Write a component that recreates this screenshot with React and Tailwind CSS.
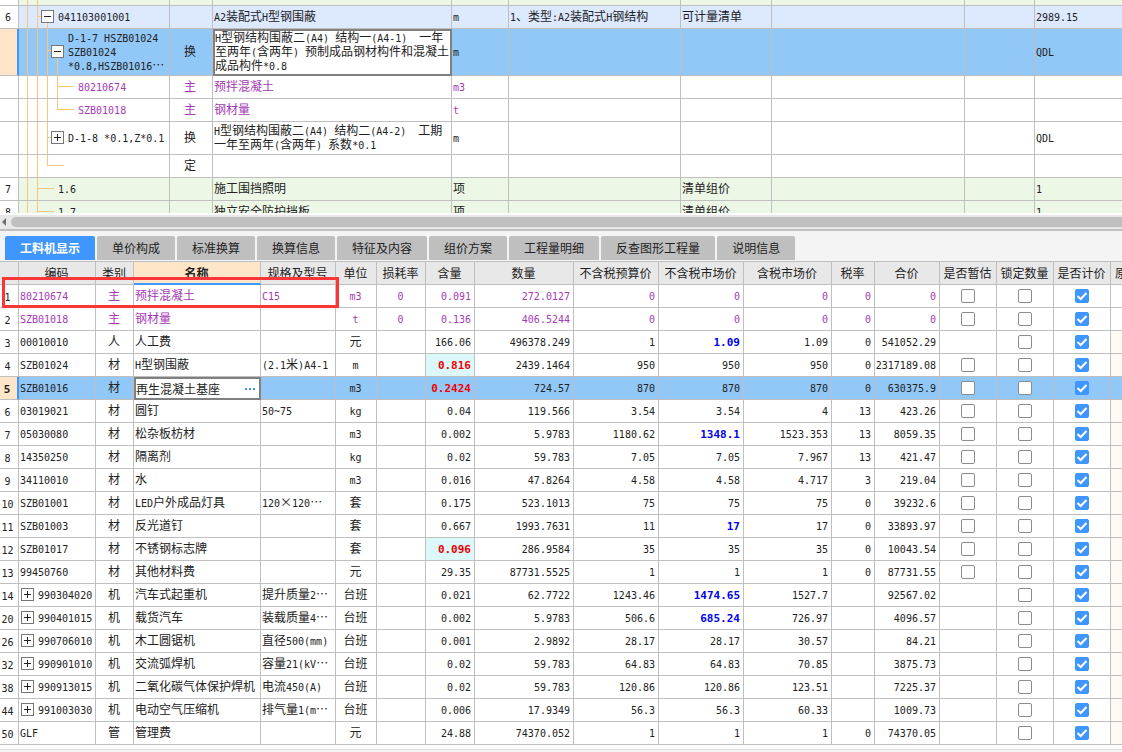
import React from "react";

const CJK = "font-['Noto_Sans_CJK_SC',sans-serif]";

/* Ideographs take 12px each, half-width characters 6px each. */
function Text({ children, bold }) {
  return String(children)
    .split(/([\x20-\x7e]+)/)
    .map((run, i) =>
      i % 2 ? (
        <span
          key={i}
          className={
            bold
              ? "font-['DejaVu_Sans_Mono',monospace] text-[11px] leading-none font-bold"
              : "font-['DejaVu_Sans_Mono',monospace] text-[10px] leading-none"
          }
        >
          {run}
        </span>
      ) : (
        run
      )
    );
}

function Toggle({ open, label }) {
  return (
    <button
      type="button"
      aria-label={label}
      aria-expanded={open}
      className="relative block size-[13px] shrink-0 border border-[#777] bg-white"
    >
      <svg viewBox="0 0 11 11" className="block size-[11px]" fill="#222">
        <path d={open ? "M2 5h7v1H2z" : "M2 5h3V2h1v3h3v1H6v3H5V6H2z"} />
      </svg>
    </button>
  );
}

function Check({ checked, label }) {
  return (
    <span className="mx-auto grid size-[14px]">
      <input
        type="checkbox"
        defaultChecked={checked}
        aria-label={label}
        className="peer col-start-1 row-start-1 m-0 size-[14px] appearance-none rounded-[2px] border border-[#8c8c8c] bg-white checked:border-[#4096ff] checked:bg-[#4096ff]"
      />
      <svg
        viewBox="0 0 14 14"
        className="pointer-events-none invisible col-start-1 row-start-1 size-[14px] peer-checked:visible"
        fill="none"
        stroke="#fff"
        strokeWidth="2"
      >
        <path d="M2.5 7L5.7 10L11.5 4" />
      </svg>
    </span>
  );
}

/* Tree guides: full = full-height lines, half = line ending at the middle,
   branch = horizontal connector [start, length], below = line starting under the toggle. */
function Guides({ full = [], half, branch, below }) {
  return (
    <svg
      className="pointer-events-none absolute inset-0 h-full w-full"
      fill="#fdc57b"
      shapeRendering="crispEdges"
      aria-hidden="true"
    >
      {full.map((x) => (
        <rect key={x} x={x} y="0" width="1" height="100%" />
      ))}
      {half && <rect x={half} y="0" width="1" height="50%" />}
      {below && <rect x={below} y="50%" width="1" height="50%" />}
      {branch && <rect x={branch[0]} y="46%" width={branch[1]} height="1" />}
    </svg>
  );
}

const TOP = [
  { h: "h-[6px]", bg: "bg-[#ecf7e6]", guides: { full: [8, 18] } },
  {
    n: "6", h: "h-[23px]", bg: "bg-[#dce9ff]", pad: "pl-[22px]", open: true, code: "041103001001",
    guides: { full: [8, 18], branch: [18, 5], below: 28 },
    name: "A2装配式H型钢围蔽", unit: "m", feat: "1、类型:A2装配式H钢结构", kind: "可计量清单", qty: "2989.15",
  },
  {
    selected: true, h: "h-[47px]", bg: "bg-[#92c8f7]", pad: "pl-[32px]", open: true,
    code: "D-1-7 HSZB01024\nSZB01024\n*0.8,HSZB01016⋯",
    guides: { full: [8, 18, 28], branch: [28, 5], below: 38 },
    cat: "换",
    name: "H型钢结构围蔽二(A4) 结构一(A4-1)  一年\n至两年(含两年) 预制成品钢材构件和混凝土\n成品构件*0.8",
    unit: "m", qty: "QDL",
  },
  {
    h: "h-[23px]", pad: "pl-[59px]", code: "80210674", purple: true, cat: "主", name: "预拌混凝土", unit: "m3",
    guides: { full: [8, 18, 28, 38], branch: [38, 17] },
  },
  {
    h: "h-[23px]", pad: "pl-[59px]", code: "SZB01018", purple: true, cat: "主", name: "钢材量", unit: "t",
    guides: { full: [8, 18, 28], half: 38, branch: [38, 17] },
  },
  {
    h: "h-[33px]", pad: "pl-[32px]", open: false, code: "D-1-8 *0.1,Z*0.1", cat: "换",
    guides: { full: [8, 18, 28], branch: [28, 5] },
    name: "H型钢结构围蔽二(A4) 结构二(A4-2)  工期\n一年至两年(含两年) 系数*0.1", unit: "m", qty: "QDL",
  },
  { h: "h-[23px]", cat: "定", guides: { full: [8, 18], half: 28, branch: [28, 17] } },
  {
    n: "7", h: "h-[23px]", bg: "bg-[#ecf7e6]", pad: "pl-[39px]", code: "1.6", name: "施工围挡照明", unit: "项",
    kind: "清单组价", qty: "1", guides: { full: [8, 18], branch: [18, 17] },
  },
  {
    n: "8", h: "h-[23px]", bg: "bg-[#ecf7e6]", pad: "pl-[39px]", code: "1.7", name: "独立安全防护挡板", unit: "项",
    kind: "清单组价", qty: "1", guides: { full: [8, 18], branch: [18, 17] },
  },
];

const BOX = "overflow-hidden border-r border-b border-[#bfbfbf] p-0";
const CELL = `${BOX} pb-0.5`;
const LEFT = `${CELL} pl-px`;

function TopTable() {
  return (
    <div className="h-[215px] overflow-hidden border-b-2 border-white">
      <table className="w-full table-fixed border-separate border-spacing-0 leading-[14px] whitespace-pre">
        <colgroup>
          <col className="w-[19px]" />
          <col className="w-[151px]" />
          <col className="w-[43px]" />
          <col className="w-[239px]" />
          <col className="w-[57px]" />
          <col className="w-[172px]" />
          <col className="w-[91px]" />
          <col className="w-[193px]" />
          <col className="w-[70px]" />
          <col />
        </colgroup>
        <tbody>
          {TOP.map((r, i) => (
            <tr key={i} className={`${r.h} ${r.bg || "bg-white"} ${r.purple ? "text-[#a43bb5]" : ""}`}>
              <th
                scope="row"
                className={
                  r.selected
                    ? "border-r-2 border-b border-r-[#4096ff] border-b-[#bfbfbf] bg-[#ffe6c8] p-0"
                    : `${CELL} bg-white pr-0.5 font-normal`
                }
              >
                {r.n && <Text>{r.n}</Text>}
              </th>
              <td className={`${CELL} relative`}>
                <Guides {...r.guides} />
                {r.code && (
                  <div className={`relative flex items-center gap-1 ${r.pad}`}>
                    {r.open !== undefined && <Toggle open={r.open} label="展开或折叠" />}
                    <span>
                      <Text>{r.code}</Text>
                    </span>
                  </div>
                )}
              </td>
              <td className={`${CELL} pr-0.5 text-center`}>{r.cat}</td>
              <td
                className={
                  r.selected
                    ? "bg-white p-0 pb-1 pl-0.5 outline-2 -outline-offset-2 outline-[#808080]"
                    : LEFT
                }
              >
                {r.name && <Text>{r.name}</Text>}
              </td>
              <td className={LEFT}>{r.unit && <Text>{r.unit}</Text>}</td>
              <td className={LEFT}>{r.feat && <Text>{r.feat}</Text>}</td>
              <td className={LEFT}>{r.kind && <Text>{r.kind}</Text>}</td>
              <td className={CELL} />
              <td className={CELL} />
              <td className={`${LEFT} border-r-0`}>{r.qty && <Text>{r.qty}</Text>}</td>
            </tr>
          ))}
        </tbody>
      </table>
    </div>
  );
}

const TABS = ["工料机显示", "单价构成", "标准换算", "换算信息", "特征及内容", "组价方案", "工程量明细", "反查图形工程量", "说明信息"];

const HEADERS = [
  "编码", "类别", "名称", "规格及型号", "单位", "损耗率", "含量", "数量", "不含税预算价",
  "不含税市场价", "含税市场价", "税率", "合价", "是否暂估", "锁定数量", "是否计价",
];

/* n, code, category, name, spec, unit, loss, content, quantity, budget, market, taxed, rate, total, estimate box */
const ROWS = [
  ["1", "80210674", "主", "预拌混凝土", "C15", "m3", "0", "0.091", "272.0127", "0", "0", "0", "0", "0", true],
  ["2", "SZB01018", "主", "钢材量", "", "t", "0", "0.136", "406.5244", "0", "0", "0", "0", "0", true],
  ["3", "00010010", "人", "人工费", "", "元", "", "166.06", "496378.249", "1", "1.09", "1.09", "0", "541052.29", false],
  ["4", "SZB01024", "材", "H型钢围蔽", "(2.1米)A4-1", "m", "", "0.816", "2439.1464", "950", "950", "950", "0", "2317189.08", true],
  ["5", "SZB01016", "材", "再生混凝土基座", "", "m3", "", "0.2424", "724.57", "870", "870", "870", "0", "630375.9", true],
  ["6", "03019021", "材", "圆钉", "50~75", "kg", "", "0.04", "119.566", "3.54", "3.54", "4", "13", "423.26", true],
  ["7", "05030080", "材", "松杂板枋材", "", "m3", "", "0.002", "5.9783", "1180.62", "1348.1", "1523.353", "13", "8059.35", true],
  ["8", "14350250", "材", "隔离剂", "", "kg", "", "0.02", "59.783", "7.05", "7.05", "7.967", "13", "421.47", true],
  ["9", "34110010", "材", "水", "", "m3", "", "0.016", "47.8264", "4.58", "4.58", "4.717", "3", "219.04", true],
  ["10", "SZB01001", "材", "LED户外成品灯具", "120×120⋯", "套", "", "0.175", "523.1013", "75", "75", "75", "0", "39232.6", true],
  ["11", "SZB01003", "材", "反光道钉", "", "套", "", "0.667", "1993.7631", "11", "17", "17", "0", "33893.97", true],
  ["12", "SZB01017", "材", "不锈钢标志牌", "", "套", "", "0.096", "286.9584", "35", "35", "35", "0", "10043.54", true],
  ["13", "99450760", "材", "其他材料费", "", "元", "", "29.35", "87731.5525", "1", "1", "1", "0", "87731.55", true],
  ["14", "990304020", "机", "汽车式起重机", "提升质量2⋯", "台班", "", "0.021", "62.7722", "1243.46", "1474.65", "1527.7", "", "92567.02", false],
  ["20", "990401015", "机", "载货汽车", "装载质量4⋯", "台班", "", "0.002", "5.9783", "506.6", "685.24", "726.97", "", "4096.57", false],
  ["26", "990706010", "机", "木工圆锯机", "直径500(mm)", "台班", "", "0.001", "2.9892", "28.17", "28.17", "30.57", "", "84.21", false],
  ["32", "990901010", "机", "交流弧焊机", "容量21(kV⋯", "台班", "", "0.02", "59.783", "64.83", "64.83", "70.85", "", "3875.73", false],
  ["38", "990913015", "机", "二氧化碳气体保护焊机", "电流450(A)", "台班", "", "0.02", "59.783", "120.86", "120.86", "123.51", "", "7225.37", false],
  ["44", "991003030", "机", "电动空气压缩机", "排气量1(m⋯", "台班", "", "0.006", "17.9349", "56.3", "56.3", "60.33", "", "1009.73", false],
  ["50", "GLF", "管", "管理费", "", "元", "", "24.88", "74370.052", "1", "1", "1", "0", "74370.05", false],
];

const RED = ["0.816", "0.2424", "0.096"];
const BLUE = ["3", "7", "11", "14", "20"];

function BottomRow({ row }) {
  const [n, code, cat, name, spec, unit, loss, content, qty, budget, market, taxed, rate, total, est] = row;
  const selected = n === "5";
  const purple = cat === "主";
  const red = RED.includes(content);
  const blue = BLUE.includes(n);
  const num = `${CELL} pr-[3px] text-right`;
  const mid = `${CELL} pr-px text-center`;
  return (
    <tr className={`h-[23px] ${selected ? "bg-[#92c8f7]" : "bg-white"} ${purple ? "text-[#a43bb5]" : ""}`}>
      <th
        scope="row"
        className={
          selected
            ? "border-r-2 border-b border-r-[#4096ff] border-b-[#bfbfbf] bg-[#ffe6c8] p-0 pr-[3px]"
            : `${BOX} pr-[3px] font-normal text-[#222]`
        }
      >
        <Text bold={selected}>{n}</Text>
      </th>
      <td className={LEFT}>
        <div className={`flex items-center gap-1 ${cat === "机" ? "pl-px" : ""}`}>
          {cat === "机" && <Toggle open={false} label={`展开 ${name}`} />}
          <span>
            <Text>{code}</Text>
          </span>
        </div>
      </td>
      <td className={mid}>{cat}</td>
      {selected ? (
        <td className="bg-white p-0 pl-px outline-2 -outline-offset-2 outline-[#808080]">
          <div className="flex items-center">
            <input
              type="text"
              aria-label="名称"
              defaultValue={name}
              className="h-[18px] min-w-0 flex-1 bg-transparent pl-px outline-none"
            />
            <button type="button" aria-label="选择" className="px-[5px]">
              <svg viewBox="0 0 11 2" className="h-0.5 w-[11px]" fill="#4a98d8">
                <path d="M0 0h2v2H0zM4 0h2v2H4zM8 0h2v2H8z" />
              </svg>
            </button>
          </div>
        </td>
      ) : (
        <td className={LEFT}>
          <Text>{name}</Text>
        </td>
      )}
      <td className={LEFT}>
        <Text>{spec}</Text>
      </td>
      <td className={mid}>
        <Text>{unit}</Text>
      </td>
      <td className={mid}>
        <Text>{loss}</Text>
      </td>
      <td className={`${num} ${red ? "text-[#f00000]" : ""} ${red && !selected ? "bg-[#dcf8f8]" : ""}`}>
        <Text bold={red}>{content}</Text>
      </td>
      <td className={num}>
        <Text>{qty}</Text>
      </td>
      <td className={num}>
        <Text>{budget}</Text>
      </td>
      <td className={`${num} ${blue ? "text-[#0000f0]" : ""}`}>
        <Text bold={blue}>{market}</Text>
      </td>
      <td className={num}>
        <Text>{taxed}</Text>
      </td>
      <td className={num}>
        <Text>{rate}</Text>
      </td>
      <td className={num}>
        <Text>{total}</Text>
      </td>
      <td className={BOX}>{est && <Check label={`是否暂估 ${name}`} />}</td>
      <td className={BOX}>
        <Check label={`锁定数量 ${name}`} />
      </td>
      <td className={BOX}>
        <Check checked label={`是否计价 ${name}`} />
      </td>
      <td className={`${BOX} border-r-0 ${purple || selected ? "" : "bg-[#fffaf4]"}`} />
    </tr>
  );
}

export default function App() {
  return (
    <main
      lang="zh-CN"
      className={`flex min-h-screen flex-col overflow-hidden bg-[#f4f4f4] text-[12px] text-[#222] ${CJK}`}
    >
      <TopTable />

      <div className="flex h-[14px] items-center gap-[5px] bg-[#e8e8e8]">
        <button type="button" aria-label="向左滚动" className="pl-0.5">
          <svg viewBox="0 0 4 8" className="h-2 w-1" fill="#707070">
            <path d="M4 0V8L0 4z" />
          </svg>
        </button>
        <div className="h-[10px] flex-1 rounded-l-full bg-[#bfbfbf]" />
      </div>

      <nav className="flex gap-0.5 border-t-2 border-b border-[#bfbfbf] bg-[#f4f4f4] pt-[5px] pb-px pl-[5px]">
        {TABS.map((t, i) => (
          <button
            key={t}
            type="button"
            className={`h-6 shrink-0 rounded-t-[2px] px-[15px] whitespace-nowrap ${
              i === 0 ? "bg-[#4096ff] font-bold text-white" : "bg-[#bfbfbf]"
            }`}
          >
            {t}
          </button>
        ))}
      </nav>

      <div className="relative border-b border-[#dcdcdc] bg-white pb-1">
        <table className="w-full table-fixed border-separate border-spacing-0 leading-[14px] whitespace-nowrap">
          <colgroup>
            <col className="w-[19px]" />
            <col className="w-[77px]" />
            <col className="w-[38px]" />
            <col className="w-[127px]" />
            <col className="w-[75px]" />
            <col className="w-[41px]" />
            <col className="w-[49px]" />
            <col className="w-[49px]" />
            <col className="w-[99px]" />
            <col className="w-[85px]" />
            <col className="w-[85px]" />
            <col className="w-[88px]" />
            <col className="w-[43px]" />
            <col className="w-[65px]" />
            <col className="w-[57px]" />
            <col className="w-[57px]" />
            <col className="w-[57px]" />
            <col />
          </colgroup>
          <thead>
            <tr className="h-[23px] bg-[#e8e8e8]">
              <td className={BOX} />
              {HEADERS.map((h) => (
                <th
                  key={h}
                  scope="col"
                  className={
                    h === "名称"
                      ? "border-r border-b-2 border-r-[#bfbfbf] border-b-[#4096ff] bg-[#ffe6c8] p-0 pr-px font-bold"
                      : `${BOX} pr-px text-center font-normal`
                  }
                >
                  {h}
                </th>
              ))}
              <th scope="col" className={`${BOX} border-r-0 pl-1 text-left font-normal`}>
                原
              </th>
            </tr>
          </thead>
          <tbody>
            {ROWS.map((r) => (
              <BottomRow key={r[0]} row={r} />
            ))}
          </tbody>
        </table>
        <div className="pointer-events-none absolute top-[15px] left-[2px] h-[31px] w-[337px] border-3 border-[#fa3638]" />
      </div>
    </main>
  );
}
